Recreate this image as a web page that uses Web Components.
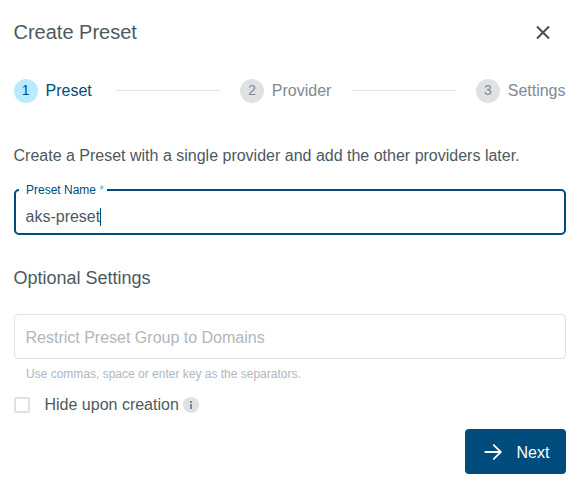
<!DOCTYPE html>
<html lang="en">
<head>
<meta charset="utf-8">
<title>Create Preset</title>
<style>
html, body { margin: 0; height: 100%; background: #fff; }
body { font-family: "Liberation Sans", Arial, sans-serif; font-size: 16px; color: #4d5960; }
</style>
</head>
<body>
<preset-dialog></preset-dialog>
<script>
const define = (name, html) => {
  const template = document.createElement('template');
  template.innerHTML = html;
  customElements.define(name, class extends HTMLElement {
    constructor() {
      super();
      this.attachShadow({ mode: 'open' }).append(template.content.cloneNode(true));
    }
  });
};

define('close-icon', `
<style>:host{display:block;width:24px;height:24px}svg{display:block}</style>
<svg width="24" height="24" viewBox="0 0 24 24"><path d="M6 6.4l12 12M18 6.4L6 18.4" stroke="#455159" stroke-width="2.1" fill="none"/></svg>`);

define('wizard-step', `
<style>
:host{display:flex;align-items:center;gap:7.5px;height:24px;color:#7e8a94;--dot:#dee2e5}
:host([active]){color:#004c7d;--dot:#b9eaff}
.dot{width:24px;height:24px;border-radius:50%;background:var(--dot);font-size:14px;line-height:23px;text-align:center;text-indent:-.5px}
.label{line-height:24px;white-space:nowrap;margin-right:.5px}
:host([active]) .label{min-width:50px}
</style>
<span class="dot"><slot name="index"></slot></span><span class="label"><slot></slot></span>`);

define('step-bar', `
<style>
:host{display:flex;align-items:center;gap:20px;height:24px}
i{flex:1;height:1px;background:#dee2e5;position:relative;top:-.5px}
</style>
<wizard-step active><span slot="index">1</span>Preset</wizard-step><i></i>
<wizard-step><span slot="index">2</span>Provider</wizard-step><i></i>
<wizard-step><span slot="index">3</span>Settings</wizard-step>`);

define('text-field', `
<style>
:host{display:block;box-sizing:border-box;height:45px;border:1px solid #dee2e5;border-radius:4px;padding:0 10.5px;line-height:46px;color:#afb6bc;position:relative}
:host([focused]){height:46px;border:2px solid #004c7d;border-radius:5px;padding:0 9.5px;line-height:51px;color:#4d5960}
.label{position:absolute;left:3px;top:-8px;box-sizing:border-box;width:88px;padding-left:7px;background:#fff;color:#004c7d;font-size:12px;line-height:14px;white-space:nowrap}
:host(:not([focused])) .label, :host(:not([focused])) .caret{display:none}
.row{display:flex;align-items:center}
.caret{width:1px;height:18px;background:#004c7d}
</style>
<div class="label"><slot name="label"></slot></div>
<div class="row"><slot></slot><span class="caret"></span></div>`);

define('check-row', `
<style>
:host{display:flex;align-items:center;height:16px}
.box{box-sizing:border-box;width:16px;height:16px;border:2px solid #dee2e5;border-radius:2px;margin-right:14.5px}
span{line-height:16px;white-space:nowrap}
svg{display:block;margin-left:auto}
.text{display:flex;width:154.5px}
</style>
<div class="box"></div><div class="text"><span><slot></slot></span>
<svg width="16" height="16" viewBox="0 0 16 16"><circle cx="8" cy="8" r="8" fill="#dee2e5"/><path d="M7 4h2v2H7zM7 7h2v5H7z" fill="#7e8a94"/></svg></div>`);

define('next-button', `
<style>
:host{display:flex;align-items:center;box-sizing:border-box;width:101px;height:45px;border-radius:4px;background:#004c7d;color:#fff;padding:2px 0 0 17px;gap:10.5px}
svg{display:block;margin-top:-1px}
</style>
<svg width="24" height="24" viewBox="0 0 24 24"><path d="M2.6 12h16M11.3 4.6l7.5 7.4-7.5 7.4" fill="none" stroke="#fff" stroke-width="1.8"/></svg>
<slot></slot>`);

define('preset-dialog', `
<style>
:host{display:block;box-sizing:border-box;padding:20px 14px 0}
header{display:flex;justify-content:space-between;align-items:center;height:24px;padding-right:11px}
h1,h2,p{margin:0;font-weight:400}
h1,h2,.intro{text-indent:-.5px}
h1{font-size:20px;line-height:24px}
step-bar{margin-top:35px}
.intro{margin-top:43px;line-height:20px;height:20px}
.name{margin-top:23px}
h2{font-size:18px;line-height:22px;margin-top:32px;color:#4d5960}
.domains{margin-top:25px}
.hint{font-size:12px;line-height:14px;color:#afb6bc;margin:8px 0 0 12px}
check-row{margin-top:16px}
footer{display:flex;justify-content:flex-end;margin-top:16px}
.req{color:#3cb9f0}
</style>
<header><h1>Create Preset</h1><close-icon></close-icon></header>
<step-bar></step-bar>
<p class="intro">Create a Preset with a single provider and add the other providers later.</p>
<text-field class="name" focused><span slot="label">Preset Name <span class="req">*</span></span>aks-preset</text-field>
<h2>Optional Settings</h2>
<text-field class="domains">Restrict Preset Group to Domains</text-field>
<p class="hint">Use commas, space or enter key as the separators.</p>
<check-row>Hide upon creation</check-row>
<footer><next-button>Next</next-button></footer>`);
</script>
</body>
</html>
